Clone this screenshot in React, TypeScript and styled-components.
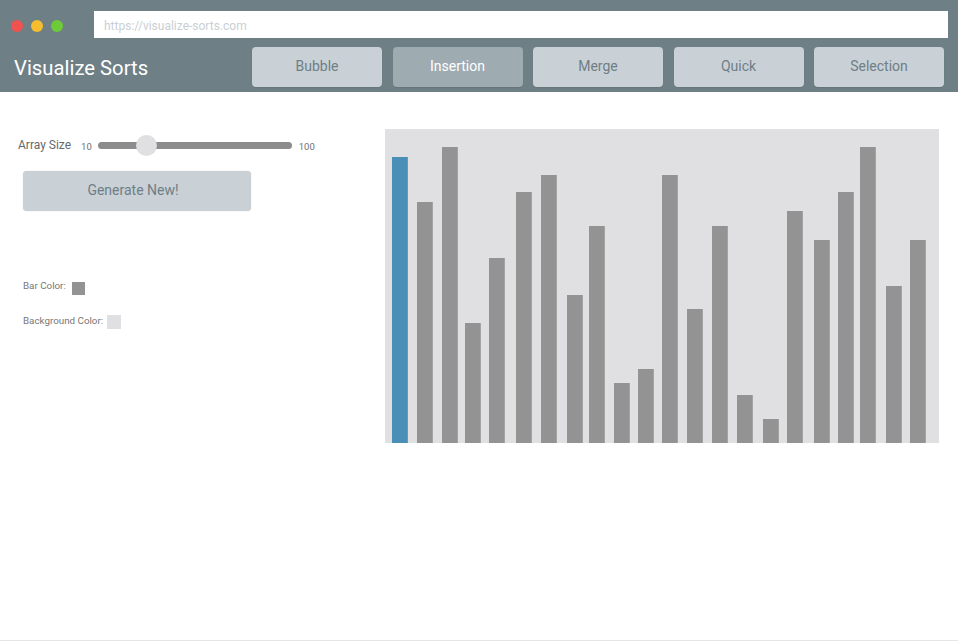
import React from "react";
import styled, { createGlobalStyle } from "styled-components";

const Global = createGlobalStyle`
  html, body { margin: 0; padding: 0; background: #ffffff; }
  body { font-family: Roboto, "Noto Sans", "Liberation Sans", sans-serif; }
  * { box-sizing: border-box; }
`;

const Page = styled.div`
  width: 958px;
  height: 641px;
  border-bottom: 1px solid #e6e6e6;
  display: flex;
  flex-direction: column;
  overflow: hidden;
`;

const Header = styled.header`
  background: #6e7f85;
  height: 92px;
  display: flex;
  flex-direction: column;
  padding-top: 11px;
`;

const TopRow = styled.div`
  display: flex;
  align-items: center;
  height: 27px;
`;

const Lights = styled.div`
  width: 94px;
  padding-left: 11px;
  padding-top: 2px;
  display: flex;
  gap: 8px;
`;

const Light = styled.span<{ $c: string }>`
  width: 12px;
  height: 12px;
  border-radius: 50%;
  background: ${(p) => p.$c};
`;

const UrlBar = styled.div`
  flex: 1;
  height: 27px;
  margin-right: 10px;
  background: #ffffff;
  display: flex;
  align-items: center;
  padding-left: 10px;
  padding-top: 2px;
  font-size: 12px;
  color: #c9cfd4;
`;

const NavRow = styled.div`
  display: flex;
  align-items: center;
  margin-top: 9px;
  height: 40px;
  padding-right: 14px;
`;

const Title = styled.h1`
  margin: 0 0 0 14px;
  font-size: 20.3px;
  font-weight: 400;
  color: #ffffff;
  position: relative;
  top: 1px;
`;

const Nav = styled.nav`
  margin-left: auto;
  display: flex;
  gap: 10.5px;
`;

const NavButton = styled.button<{ $active?: boolean }>`
  width: 130px;
  height: 40px;
  border: none;
  border-radius: 4px;
  background: ${(p) => (p.$active ? "#9eabb1" : "#c9d1d7")};
  color: ${(p) => (p.$active ? "#ffffff" : "#6f7e85")};
  font-family: inherit;
  font-size: 14px;
  box-shadow: 0 1px 1px rgba(0, 0, 0, 0.08);
  padding: 0 0 2px 0;
`;

const Main = styled.main`
  display: flex;
  padding-top: 37px;
`;

const Controls = styled.section`
  width: 385px;
  padding-left: 18px;
  display: flex;
  flex-direction: column;
`;

const SizeRow = styled.div`
  display: flex;
  align-items: center;
  height: 20px;
  margin-top: 6px;
`;

const Label = styled.span`
  font-size: 12px;
  color: #666a6c;
`;

const Tick = styled.span`
  font-size: 9.5px;
  color: #707070;
  margin: 2px 0 0 0;
`;

const Track = styled.div`
  position: relative;
  width: 194px;
  height: 7px;
  border-radius: 4px;
  background: #8c8c8c;
  margin: 0 7px 0 6px;
`;

const Thumb = styled.span`
  position: absolute;
  left: 38px;
  top: -7px;
  width: 21px;
  height: 21px;
  border-radius: 50%;
  background: #e0e0e2;
`;

const Generate = styled.button`
  margin: 16px 0 0 5px;
  width: 228px;
  height: 40px;
  border: none;
  border-radius: 4px;
  background: #c9d1d7;
  color: #6f7e85;
  font-family: inherit;
  font-size: 14px;
  box-shadow: 0 0 1px rgba(0, 0, 0, 0.25);
  padding: 0 8px 2px 0;
`;

const ColorRow = styled.div<{ $mt: number }>`
  display: flex;
  align-items: flex-start;
  margin: ${(p) => p.$mt}px 0 0 5px;
`;

const SmallLabel = styled.span<{ $dy: number }>`
  font-size: 9.8px;
  color: #777777;
  line-height: 12px;
  margin-top: ${(p) => p.$dy}px;
`;

const Swatch = styled.span<{ $c: string; $s: number; $ml: number }>`
  width: ${(p) => p.$s}px;
  height: ${(p) => p.$s}px;
  background: ${(p) => p.$c};
  margin-left: ${(p) => p.$ml}px;
`;

const Chart = styled.div`
  width: 554px;
  height: 314px;
  background: #e0e0e2;
  display: flex;
  align-items: flex-end;
`;

const Bar = styled.div<{ $active?: boolean }>`
  width: 16px;
  flex: none;
  background: ${(p) => (p.$active ? "#4a90b6" : "#939393")};
  border-right: 1px solid ${(p) => (p.$active ? "#5e9dc0" : "#a3a3a3")};
`;

const starts = [392, 417, 442, 465, 489, 516, 541, 567, 589, 614, 638, 662, 687, 712, 737, 763, 787, 814, 838, 860, 886, 910];
const tops = [157, 202, 147, 323, 258, 192, 175, 295, 226, 383, 369, 175, 309, 226, 395, 419, 211, 240, 192, 147, 286, 240];

const bars = starts.map((s, i) => ({
  gap: i === 0 ? s - 385 : s - (starts[i - 1] + 16),
  height: 443 - tops[i],
}));

const sorts = ["Bubble", "Insertion", "Merge", "Quick", "Selection"];

export default function App() {
  return (
    <>
      <Global />
      <Page>
        <Header>
          <TopRow>
            <Lights>
              <Light $c="#f0524f" />
              <Light $c="#f6be2f" />
              <Light $c="#6ccb37" />
            </Lights>
            <UrlBar>https://visualize-sorts.com</UrlBar>
          </TopRow>
          <NavRow>
            <Title>Visualize Sorts</Title>
            <Nav>
              {sorts.map((s) => (
                <NavButton key={s} $active={s === "Insertion"}>
                  {s}
                </NavButton>
              ))}
            </Nav>
          </NavRow>
        </Header>
        <Main>
          <Controls>
            <SizeRow>
              <Label>Array Size</Label>
              <Tick style={{ marginLeft: 10 }}>10</Tick>
              <Track>
                <Thumb />
              </Track>
              <Tick>100</Tick>
            </SizeRow>
            <Generate>Generate New!</Generate>
            <ColorRow $mt={71}>
              <SmallLabel $dy={-2}>Bar Color:</SmallLabel>
              <Swatch $c="#939393" $s={13} $ml={6} />
            </ColorRow>
            <ColorRow $mt={20}>
              <SmallLabel $dy={0}>Background Color:</SmallLabel>
              <Swatch $c="#e0e0e2" $s={14} $ml={4} />
            </ColorRow>
          </Controls>
          <Chart>
            {bars.map((b, i) => (
              <Bar key={i} $active={i === 0} style={{ height: b.height, marginLeft: b.gap }} />
            ))}
          </Chart>
        </Main>
      </Page>
    </>
  );
}
